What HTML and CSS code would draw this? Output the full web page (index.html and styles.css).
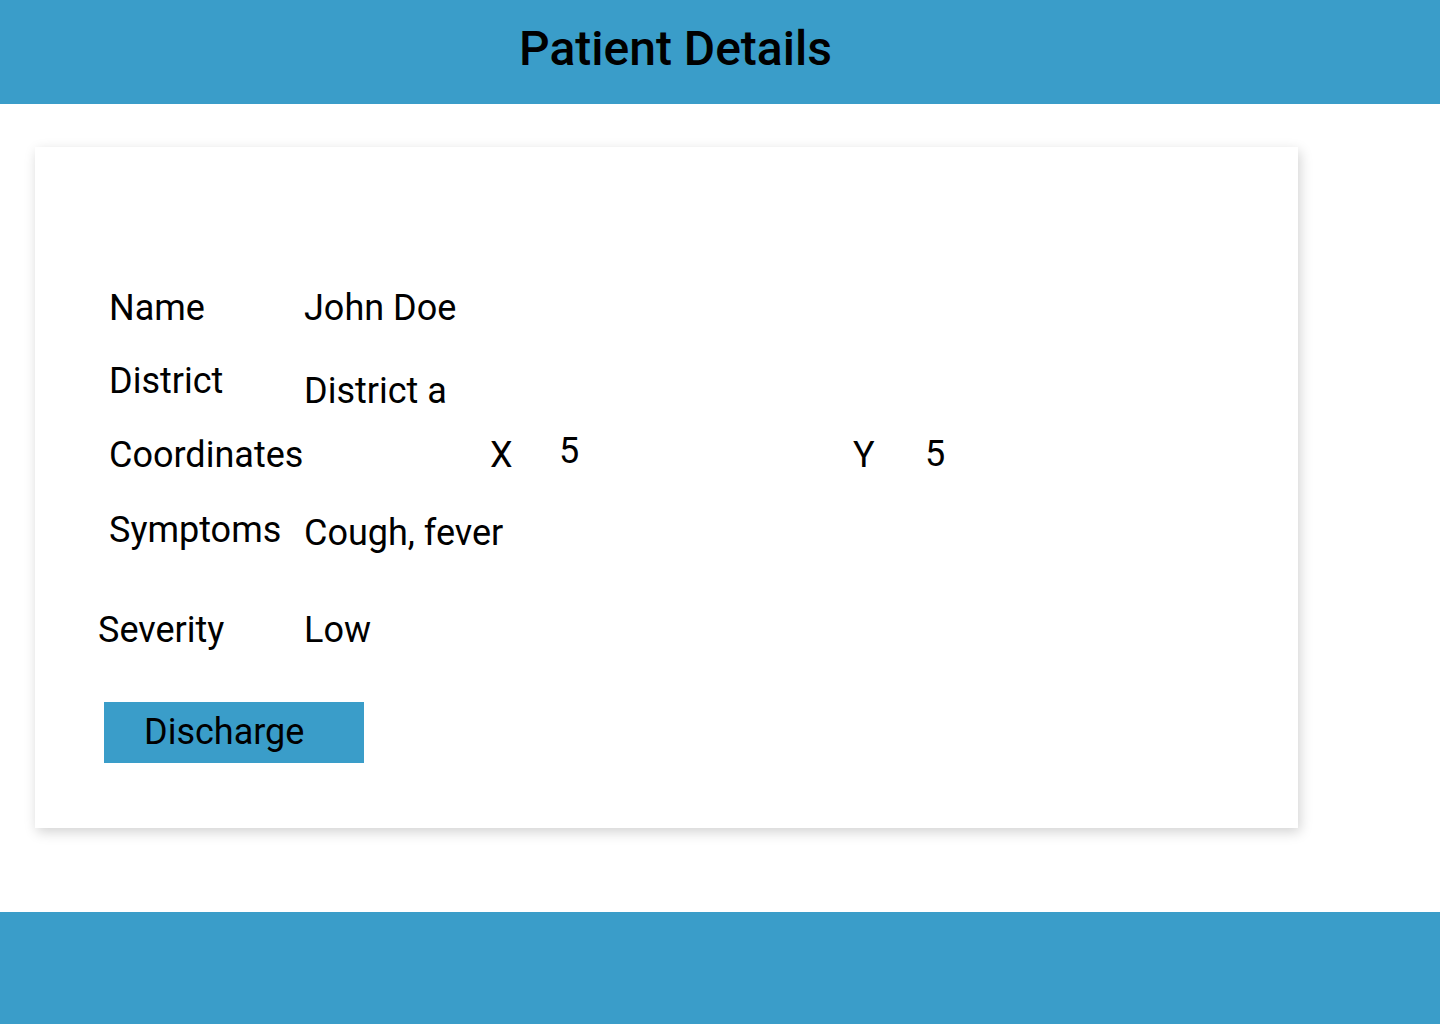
FILE: index.html
```html
<!DOCTYPE html>
<html lang="en">
<head>
<meta charset="utf-8">
<title>Patient Details</title>
<link rel="stylesheet" href="styles.css">
</head>
<body>
<header class="topbar">
  <h1 class="title">Patient Details</h1>
</header>
<main class="content">
  <section class="card">
    <div class="row row-name">
      <span class="label">Name</span>
      <span class="value">John Doe</span>
    </div>
    <div class="row row-district">
      <span class="label">District</span>
      <span class="value value-low">District a</span>
    </div>
    <div class="row row-coords">
      <span class="label">Coordinates</span>
      <span class="axis axis-x">X</span>
      <span class="coord coord-x">5</span>
      <span class="axis axis-y">Y</span>
      <span class="coord coord-y">5</span>
    </div>
    <div class="row row-symptoms">
      <span class="label">Symptoms</span>
      <span class="value value-sym">Cough, fever</span>
    </div>
    <div class="row row-severity">
      <span class="label label-sev">Severity</span>
      <span class="value">Low</span>
    </div>
    <button class="discharge" type="button">Discharge</button>
  </section>
</main>
<footer class="bottombar"></footer>
</body>
</html>
```
FILE: styles.css
```css
* { box-sizing: border-box; }
html, body {
  margin: 0;
  padding: 0;
  background: #ffffff;
  font-family: Roboto, "Liberation Sans", Arial, sans-serif;
  color: #000000;
}
body {
  width: 1440px;
  height: 1024px;
  display: flex;
  flex-direction: column;
  overflow: hidden;
}
.topbar {
  height: 104px;
  background: #3a9dc9;
  padding-left: 519px;
  flex-shrink: 0;
}
.title {
  margin: 0;
  font-size: 48px;
  font-weight: 500;
  line-height: 98px;
}
.content {
  flex: 1;
  padding: 43px 0 0 35px;
}
.card {
  width: 1263px;
  height: 681px;
  background: #ffffff;
  box-shadow: 2px 4px 12px rgba(0, 0, 0, 0.18);
  padding: 140px 0 0 74px;
  display: flex;
  flex-direction: column;
  align-items: flex-start;
}
.row {
  display: flex;
  align-items: flex-start;
  font-size: 36px;
  line-height: 42px;
}
.label {
  width: 195px;
  flex-shrink: 0;
  white-space: nowrap;
}
.row-district { margin-top: 31px; }
.value-low { padding-top: 10px; }
.row-coords { margin-top: 22px; }
.axis-x { margin-left: 186px; width: 69px; }
.coord-x { margin-top: -4px; width: 294px; }
.axis-y { width: 72px; }
.coord-y { margin-top: -1px; }
.row-symptoms { margin-top: 33px; }
.value-sym { padding-top: 3px; }
.row-severity { margin-top: 55px; }
.label-sev { margin-left: -11px; width: 206px; }
.discharge {
  margin: 51px 0 0 -5px;
  width: 260px;
  height: 61px;
  border: none;
  border-radius: 0;
  background: #3a9dc9;
  color: #000000;
  font-family: Roboto, "Liberation Sans", Arial, sans-serif;
  font-size: 36px;
  line-height: 58px;
  padding: 0 0 1px 40px;
  text-align: left;
}
.bottombar {
  height: 112px;
  background: #3a9dc9;
  flex-shrink: 0;
}
```
